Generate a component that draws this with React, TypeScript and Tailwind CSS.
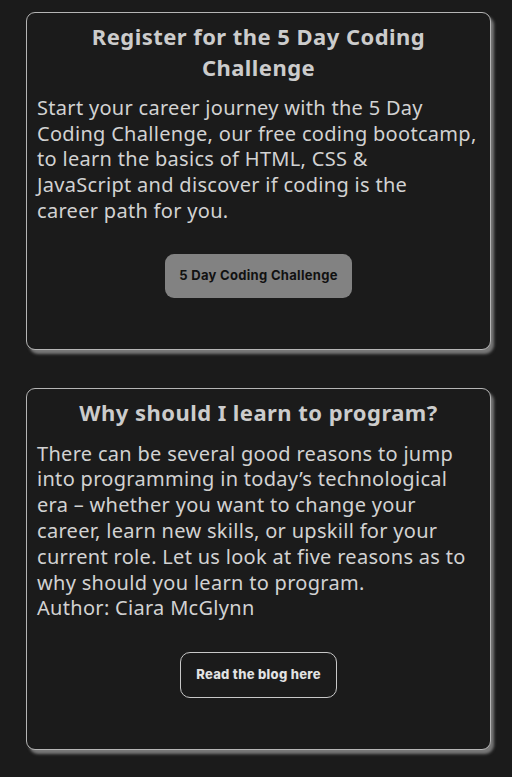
export default function App() {
  const body = { fontFamily: '"Noto Sans", "Open Sans", sans-serif' }
  const btn = { fontFamily: 'Inter, "Liberation Sans", sans-serif' }

  return (
    <div className="min-h-[777px] bg-[#1b1b1b] pt-3 pb-8">
      {/* Challenge card */}
      <section className="ml-[26px] w-[465px] rounded-[9px] border border-[#b5b5b5] bg-[#1b1b1b] px-[10px] pt-[8px] pb-[51px] shadow-[3px_4px_3px_#787878]" style={body}>
        <h2 className="mb-[12px] text-center text-[22px] font-bold leading-[31px] tracking-[0.45px] text-[#cccccc]">
          Register for the 5 Day Coding Challenge
        </h2>
        <p className="text-[20px] leading-[25.7px] tracking-[0.3px] text-[#d2d2d2]">
          Start your career journey with the 5 Day Coding Challenge, our free coding bootcamp, to learn the basics of HTML, CSS &amp;
          <br />
          JavaScript and discover if coding is the
          <br />
          career path for you.
        </p>
        <div className="mt-[30px] flex justify-center">
          <button className="h-[44px] rounded-[9px] bg-[#828282] px-[14px] text-[13px] font-bold tracking-[0.3px] text-[#111]" style={btn}>
            5 Day Coding Challenge
          </button>
        </div>
      </section>

      {/* Blog card */}
      <section className="mt-[38px] ml-[26px] w-[465px] rounded-[9px] border border-[#b5b5b5] bg-[#1b1b1b] px-[10px] pt-[8px] pb-[51px] shadow-[3px_4px_3px_#787878]" style={body}>
        <h2 className="mb-[13px] text-center text-[22px] font-bold leading-[31px] tracking-[0.45px] text-[#cccccc]">
          Why should I learn to program?
        </h2>
        <p className="text-[20px] leading-[25.8px] tracking-[0.3px] text-[#d2d2d2]">
          There can be several good reasons to jump into programming in today’s technological era – whether you want to change your career, learn new skills, or upskill for your current role. Let us look at five reasons as to why should you learn to program.
          <br />
          Author: Ciara McGlynn
        </p>
        <div className="mt-[31px] flex justify-center">
          <button className="h-[46px] rounded-[10px] border border-[#c8c8c8] px-[15px] text-[13px] font-extrabold tracking-[0.3px] text-[#e2e2e2]" style={btn}>
            Read the blog here
          </button>
        </div>
      </section>
    </div>
  )
}
